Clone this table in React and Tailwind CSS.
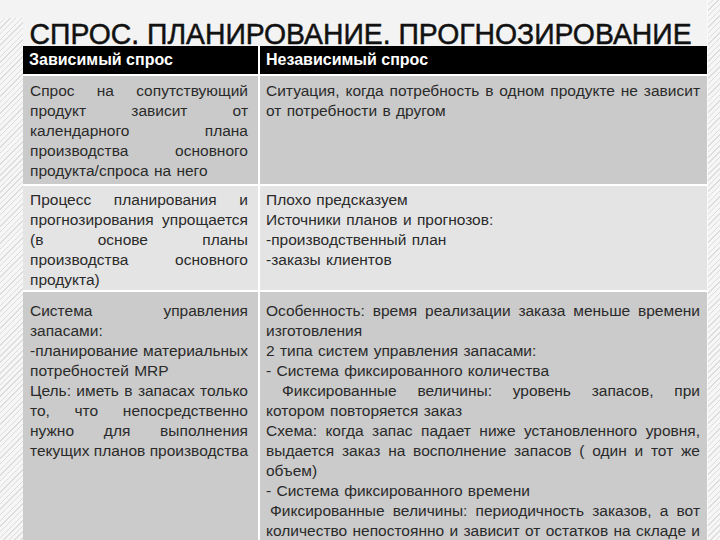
const rows = [
  {
    bg: "bg-[#cacaca]",
    pad: "pt-[5px] pb-[3px]",
    left: [
      ["Спрос на сопутствующий", true],
      ["продукт зависит от", true],
      ["календарного плана", true],
      ["производства основного", true],
      ["продукта/спроса на него", false],
    ],
    right: [
      ["Ситуация, когда потребность в одном продукте не зависит", true],
      ["от потребности в другом", false],
    ],
  },
  {
    bg: "bg-[#e4e4e4]",
    pad: "pt-[4px] pb-0",
    left: [
      ["Процесс планирования и", true],
      ["прогнозирования упрощается", true],
      ["(в основе планы", true],
      ["производства основного", true],
      ["продукта)", false],
    ],
    right: [
      ["Плохо предсказуем", false],
      ["Источники планов и прогнозов:", false],
      ["-производственный план", false],
      ["-заказы клиентов", false],
    ],
  },
  {
    bg: "bg-[#cbcbcb]",
    pad: "pt-[9px] pb-[3px]",
    left: [
      ["Система управления", true],
      ["запасами:", false],
      ["-планирование материальных", true],
      ["потребностей MRP", false],
      ["Цель: иметь в запасах только", true],
      ["то, что непосредственно", true],
      ["нужно для выполнения", true],
      ["текущих планов производства", true],
    ],
    right: [
      ["Особенность: время реализации заказа меньше времени", true],
      ["изготовления", false],
      ["2 типа систем управления запасами:", false],
      ["- Система фиксированного количества", false],
      ["Фиксированные величины: уровень  запасов, при", true, "pl-[16px]"],
      ["котором повторяется заказ", false],
      ["Схема: когда запас падает ниже установленного уровня,", true],
      ["выдается заказ на восполнение запасов ( один и тот же", true],
      ["объем)", false],
      ["- Система фиксированного времени", false],
      ["Фиксированные величины: периодичность заказов, а вот", true, "pl-[4px]"],
      ["количество непостоянно и зависит от остатков на складе и", true],
    ],
  },
];

const stripes =
  "bg-[repeating-linear-gradient(135deg,#f6f6f6_0px,#f6f6f6_3px,#dddddd_3px,#dddddd_4px)]";

function Lines({ items }) {
  return items.map(([t, j, extra], i) => (
    <div
      key={i}
      className={`${j ? "text-justify [text-align-last:justify]" : "text-left whitespace-nowrap [word-spacing:1px]"} ${extra || ""}`}
    >
      {t}
    </div>
  ));
}

export default function App() {
  return (
    <div
      className="flex h-[540px] w-[720px] overflow-hidden bg-[#f3f3f3] text-[#2a2a2a]"
      style={{ fontFamily: '"Liberation Sans", Arial, sans-serif' }}
    >
      <div className={`w-[23px] shrink-0 mt-[18px] ${stripes}`} />
      <div className="w-[684px] shrink-0">
        <h1 className="h-[46px] pl-[7px] pt-[19px] text-[30px] leading-none font-normal text-[#111] whitespace-nowrap origin-left scale-x-[0.945] [-webkit-text-stroke:0.5px_#111]">
          СПРОС. ПЛАНИРОВАНИЕ. ПРОГНОЗИРОВАНИЕ
        </h1>
        <div className="relative grid grid-cols-[235px_447px] gap-[2px] bg-white">
          <div className="h-[28px] bg-black pl-[6px] text-[16px] font-bold leading-[28px] text-white">
            Зависимый спрос
          </div>
          <div className="h-[28px] bg-black pl-[6px] text-[16px] font-bold leading-[28px] text-white">
            Независимый спрос
          </div>
          {rows.map((r, i) => (
            <div key={i} className="contents">
              <div className={`${r.bg} ${r.pad} pl-[7px] pr-[10px] text-[15.5px] leading-[20px]`}>
                <Lines items={r.left} />
              </div>
              <div className={`${r.bg} ${r.pad} pl-[6px] pr-[7px] text-[15.5px] leading-[20px]`}>
                <Lines items={r.right} />
              </div>
            </div>
          ))}
        </div>
      </div>
      <div className={`flex-1 border-l border-[#fafafa] ${stripes}`} />
    </div>
  );
}
